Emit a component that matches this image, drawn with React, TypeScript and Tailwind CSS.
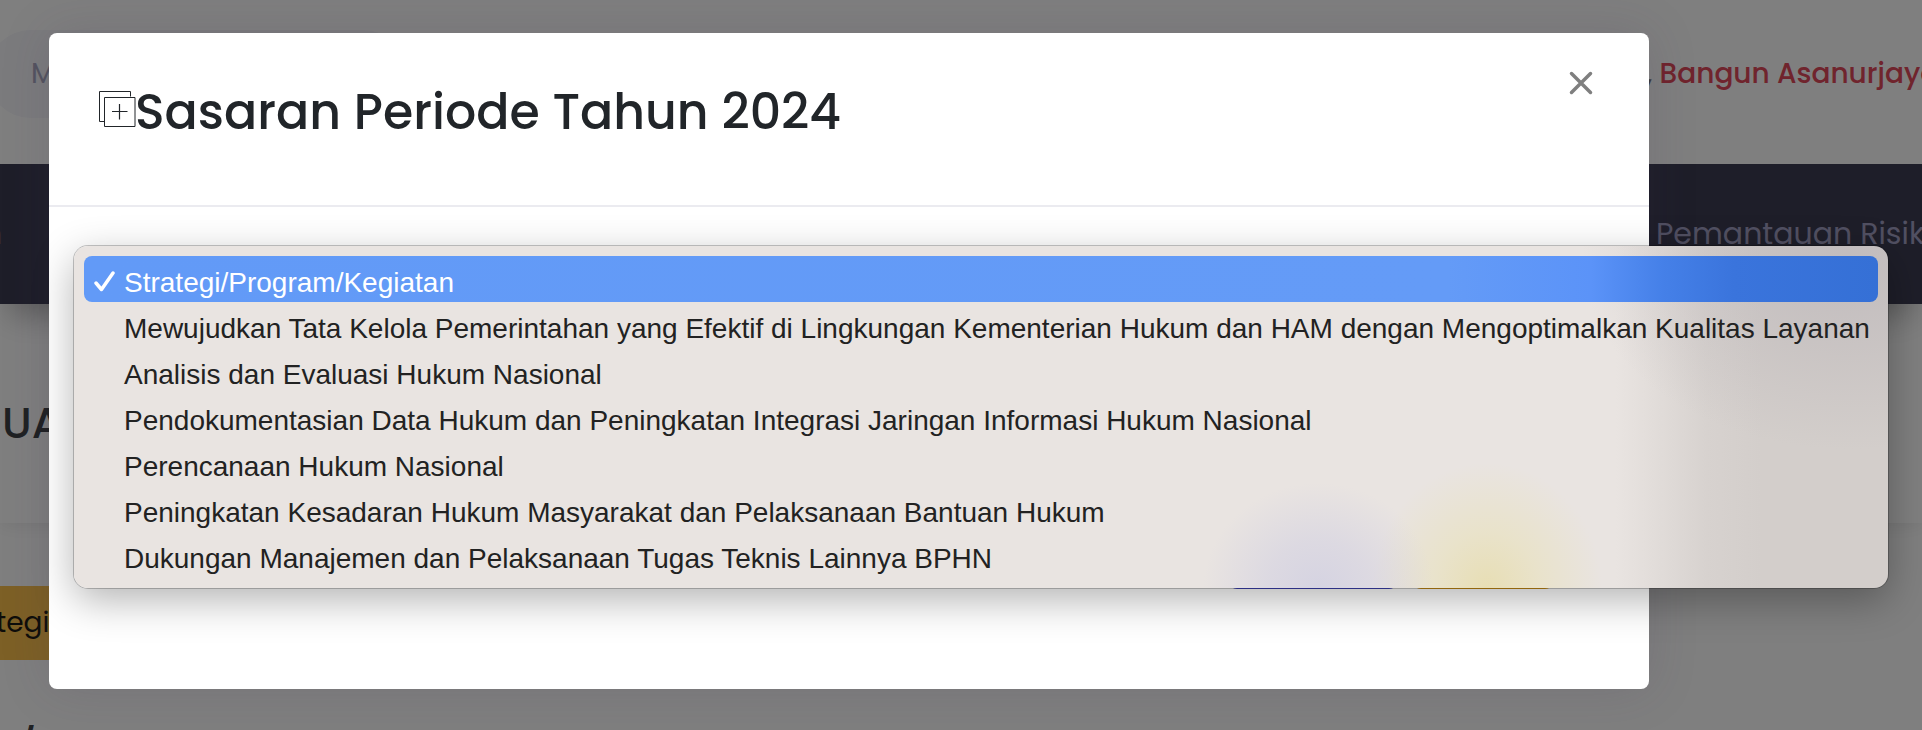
import { useState } from "react";

const options = [
  "Strategi/Program/Kegiatan",
  "Mewujudkan Tata Kelola Pemerintahan yang Efektif di Lingkungan Kementerian Hukum dan HAM dengan Mengoptimalkan Kualitas Layanan",
  "Analisis dan Evaluasi Hukum Nasional",
  "Pendokumentasian Data Hukum dan Peningkatan Integrasi Jaringan Informasi Hukum Nasional",
  "Perencanaan Hukum Nasional",
  "Peningkatan Kesadaran Hukum Masyarakat dan Pelaksanaan Bantuan Hukum",
  "Dukungan Manajemen dan Pelaksanaan Tugas Teknis Lainnya BPHN",
];

function StackPlusIcon() {
  return (
    <svg className="mt-5 h-9 w-9 shrink-0 overflow-visible" viewBox="0 0 36 36" fill="none" stroke="#212529" aria-hidden="true">
      <path d="M5.500 30.500H.500V.500h31v5" />
      <path d="M5.500 6.500h30.500v29H5.500z" />
      <path d="M20.500 13v15.500M13 20.500h15.500" strokeWidth="1.200" />
    </svg>
  );
}

function CheckIcon() {
  return (
    <svg className="h-6 w-6" viewBox="0 0 24 24" fill="none" stroke="white" strokeWidth="3.500" strokeLinecap="round" strokeLinejoin="round" aria-hidden="true">
      <path d="M4 12l5.500 6.500L21 2" />
    </svg>
  );
}

function Page() {
  return (
    <div className="h-full bg-white">
      <header className="flex h-[164px] items-start justify-between pt-[30px]">
        <input
          type="search"
          aria-label="Menu"
          placeholder="Menu"
          className="-ml-[13px] h-[88px] w-[420px] rounded-full bg-[#f6f6fb] pl-11 text-[28px] placeholder:text-[#a8a8c0]"
        />
        <a href="#profil" className="mt-[23px] w-[276px] text-[28px] leading-[42px] font-medium whitespace-nowrap text-[#e0485a]">
          <span className="text-[#777777]">, </span>Bangun Asanurjaya
        </a>
      </header>
      <nav className="relative flex h-[140px] items-center justify-between bg-[#3c3c52] pb-[2px] text-[30px] text-[#a2a0c4] shadow-[0_20px_30px_-10px_rgba(0,0,0,0.3)]">
        <a href="#beranda" className="-ml-[17px]">n</a>
        <a href="#pemantauan" className="w-[266px] whitespace-nowrap">Pemantauan Risiko</a>
      </nav>
      <main>
        <h2 className="flex h-[219px] items-start pt-[92px] pl-[2px] text-[43px] leading-[54px] font-medium text-[#3f4247] shadow-[0_0_20px_rgba(0,0,0,0.1)]">
          UA
        </h2>
        <div className="pt-[63px]">
          <div className="-ml-1 flex h-[74px] w-40 items-center bg-[#fac04c] text-[28px] text-[#1c1a14]">tegi</div>
        </div>
        <p className="pt-[64px] pl-4 text-[40px] leading-[52px] font-medium text-[#3f4247]">/</p>
      </main>
    </div>
  );
}

export default function App() {
  const [selected, setSelected] = useState(0);

  return (
    <div className="relative h-screen overflow-hidden font-['Poppins','Inter',sans-serif]">
      <Page />
      <div className="absolute inset-0 bg-black/50">
        <section
          role="dialog"
          aria-labelledby="judul"
          className="mt-[33px] mr-[273px] ml-[49px] rounded-lg bg-white shadow-[0_0_50px_rgba(62,50,80,0.15)]"
        >
          <div className="flex items-start justify-between border-b-2 border-[#ebebf0] pt-[32px] pr-[50px] pb-[52px] pl-[50px]">
            <h1 id="judul" className="mt-[6px] flex items-start text-[49px] leading-[82px] font-medium text-[#212529]">
              <StackPlusIcon />
              Sasaran Periode Tahun 2024
            </h1>
            <button type="button" aria-label="Tutup" className="flex h-9 w-9 items-center justify-center text-[#7f7f7f]">
              <svg className="h-6 w-6" viewBox="0 0 24 24" stroke="currentColor" strokeWidth="3.500" strokeLinecap="round" aria-hidden="true">
                <path d="M2.500 2.500l19 19M21.500 2.500l-19 19" />
              </svg>
            </button>
          </div>
          <div className="relative px-6 pt-[39px] pb-[100px]">
            <label htmlFor="sasaran" className="sr-only">Strategi/Program/Kegiatan</label>
            <select
              id="sasaran"
              value={selected}
              onChange={(e) => setSelected(Number(e.target.value))}
              className="block h-[76px] w-full appearance-none rounded-lg bg-white px-6 text-[28px] text-transparent"
            >
              {options.map((o, i) => (
                <option key={o} value={i}>{o}</option>
              ))}
            </select>
            <div className="mt-[211px] flex justify-end gap-4 pr-[72px]">
              <button type="button" aria-label="Simpan" className="h-14 w-[168px] rounded-lg bg-[#4a4fd8]" />
              <button type="button" aria-label="Batal" className="h-14 w-[140px] rounded-lg bg-[#f0a818]" />
            </div>
            <ul
              role="listbox"
              aria-label="Strategi/Program/Kegiatan"
              className="absolute top-[39px] left-[25px] w-max rounded-[14px] bg-[radial-gradient(ellipse_115px_105px_at_68.6%_100%,rgba(200,200,226,0.6)_0%,rgba(205,204,226,0.45)_45%,rgba(215,212,226,0)_100%),radial-gradient(ellipse_115px_125px_at_77.9%_100%,rgba(231,220,165,0.75)_0%,rgba(233,225,180,0.5)_45%,rgba(236,226,214,0)_100%),radial-gradient(ellipse_270px_190px_at_98%_4%,rgba(176,170,176,0.5)_0%,rgba(180,174,178,0.32)_45%,rgba(190,184,186,0)_100%),linear-gradient(90deg,#e9e4e1_85%,#e2ddda_87%,#d7d2cf_90%,#d3cecb_93%)] p-[10px] font-['Liberation_Sans',sans-serif] text-[28px] leading-[46px] text-[#222222] shadow-[0_0_0_1px_rgba(0,0,0,0.22),0_12px_40px_rgba(0,0,0,0.3)]"
            >
              {options.map((o, i) => (
                <li
                  key={o}
                  role="option"
                  aria-selected={i === selected}
                  onClick={() => setSelected(i)}
                  className={
                    i === selected
                      ? "flex h-[46px] items-center rounded-lg bg-[linear-gradient(90deg,#629af7_0%,#649bf7_76%,#5b93f8_84%,#4580e8_88%,#3a74dc_92%,#3570d6_100%)] pt-2 pr-2 text-white"
                      : "flex h-[46px] items-center pt-2 pr-2"
                  }
                >
                  <span className="flex w-10 justify-center">{i === selected && <CheckIcon />}</span>
                  {o}
                </li>
              ))}
            </ul>
          </div>
        </section>
      </div>
    </div>
  );
}
